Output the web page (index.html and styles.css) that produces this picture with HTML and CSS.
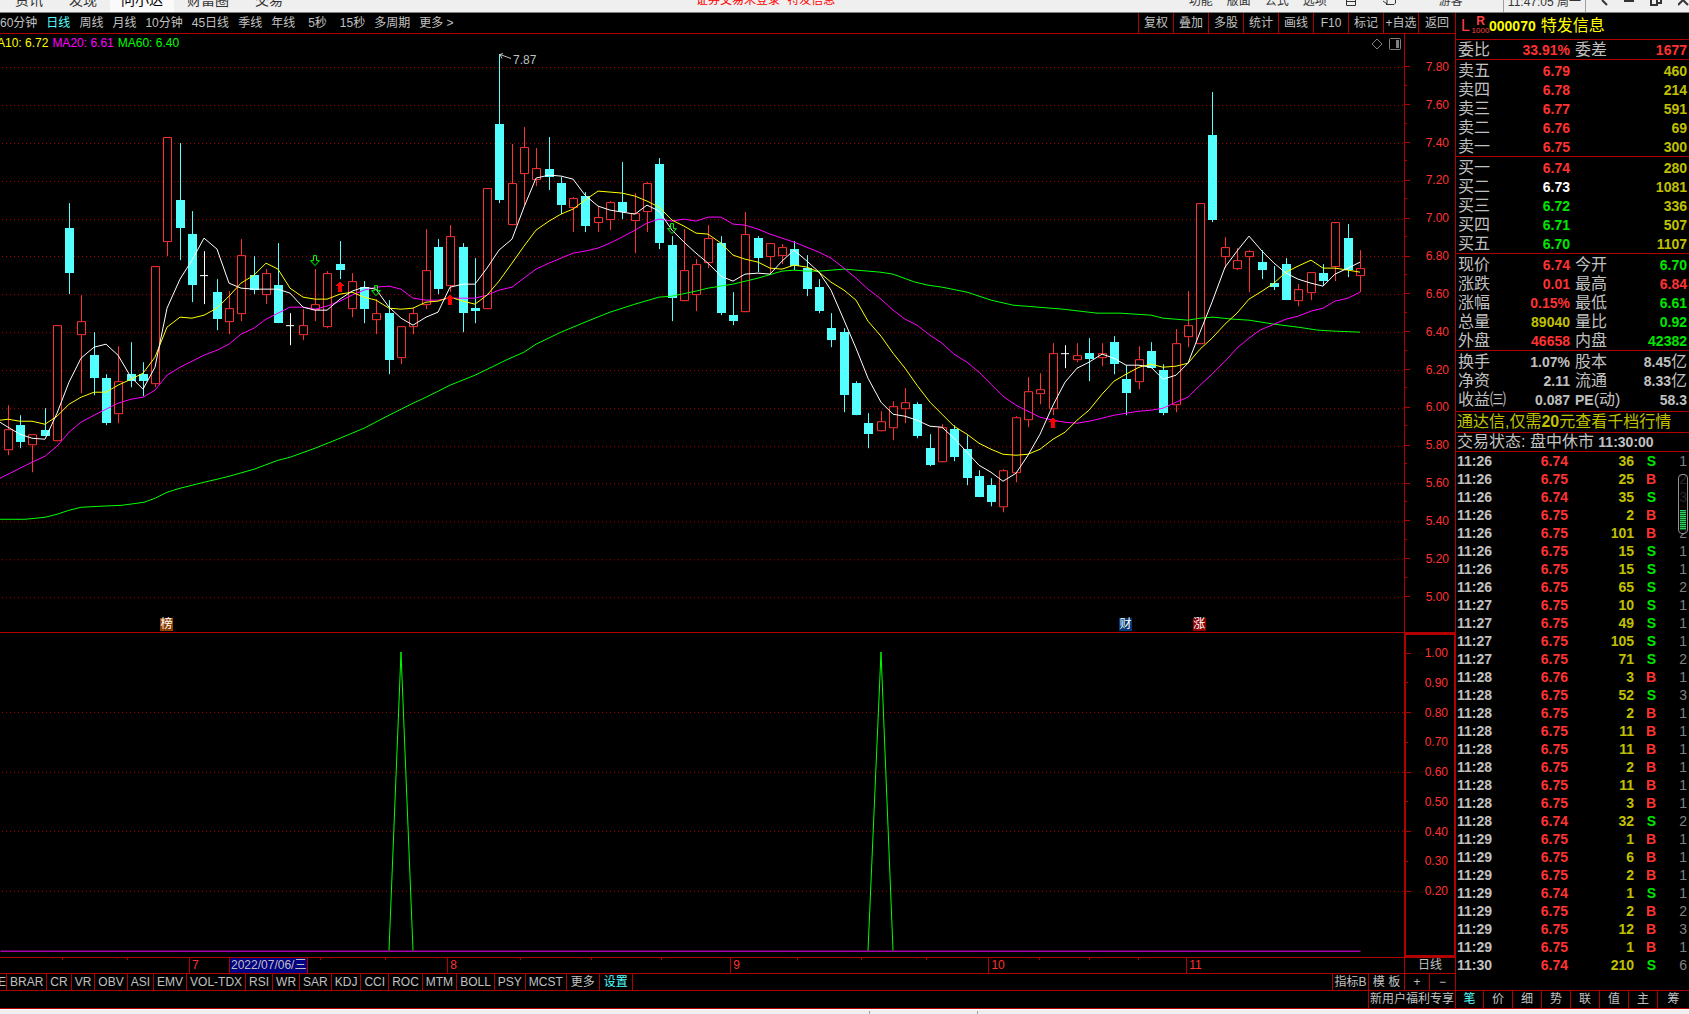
FILE: index.html
```html
<!DOCTYPE html>
<html lang="zh-CN">
<head>
<meta charset="utf-8">
<title>000070 特发信息 - 日线</title>
<link rel="stylesheet" href="styles.css">
</head>
<body>
<header class="titlebar">
  <nav class="main-tabs">
    <button>资讯</button><button>发现</button><button class="selected">问小达</button><button>财富圈</button><button>交易</button>
  </nav>
  <div class="notice"><span>证券交易未登录</span><span>特发信息</span></div>
  <div class="menu">
    <button>功能</button><button>版面</button><button>公式</button><button>选项</button>
    <svg class="menu-icon" width="10" height="20" viewBox="0 0 10 20"><path d="M0.500 0V5.500H9.500V0M1 1.500H9" /></svg>
    <svg class="menu-icon mail" width="13" height="20" viewBox="0 0 13 20"><path d="M0 1L4 4M4 0V4M3 4.500H11L12.500 3V0" /></svg>
    <button class="guest">游客</button>
    <time class="clock">11:47:05 周一</time>
    <div class="window-buttons">
      <svg width="7" height="20" viewBox="0 0 7 20"><path d="M6 5L1 0" /></svg>
      <svg width="10" height="20" viewBox="0 0 10 20"><path d="M0 1H10" /></svg>
      <svg width="12" height="20" viewBox="0 0 12 20"><path d="M1 0V5H7V0M7 3H11V0" /></svg>
      <svg width="11" height="20" viewBox="0 0 11 20"><path d="M0 5L5 0L10 5" /></svg>
    </div>
  </div>
</header>

<main class="workspace">
  <section class="chart-area">
    <div class="toolbar">
      <nav class="periods">
        <button>60分钟</button><button class="active">日线</button><button>周线</button><button>月线</button><button>10分钟</button><button>45日线</button><button>季线</button><button>年线</button><button class="seconds">5秒</button><button>15秒</button><button>多周期</button><button>更多 &gt;</button>
      </nav>
      <nav class="tools">
        <button>复权</button><button>叠加</button><button>多股</button><button>统计</button><button>画线</button><button>F10</button><button>标记</button><button>+自选</button><button>返回</button>
      </nav>
    </div>

    <div class="pane price-pane">
      <div class="plot">
        <svg id="price-chart" viewBox="0 34 1404 598" preserveAspectRatio="none"></svg>
        <div class="legend"><span class="yellow">MA10: 6.72</span><span class="magenta">MA20: 6.61</span><span class="lime">MA60: 6.40</span></div>
        <div class="plot-icons">
          <svg width="12" height="12" viewBox="0 0 12 12"><path d="M6 1L11 6L6 11L1 6Z" /></svg>
          <svg width="12" height="12" viewBox="0 0 12 12"><rect x="0.500" y="0.500" width="11" height="11" rx="1" /><rect class="fill" x="7" y="2" width="3" height="8" /></svg>
        </div>
        <span class="peak">7.87</span>
        <span class="badge brown" style="left:11.400%">榜</span>
        <span class="badge blue" style="left:79.700%">财</span>
        <span class="badge red" style="left:84.950%">涨</span>
      </div>
      <ol class="axis price-axis">
        <li>7.80</li><li>7.60</li><li>7.40</li><li>7.20</li><li>7.00</li><li>6.80</li><li>6.60</li><li>6.40</li><li>6.20</li><li>6.00</li><li>5.80</li><li>5.60</li><li>5.40</li><li>5.20</li><li>5.00</li>
      </ol>
    </div>

    <div class="pane indicator-pane">
      <div class="plot"><svg id="indicator-chart" viewBox="0 633 1404 324" preserveAspectRatio="none"></svg></div>
      <ol class="axis indicator-axis">
        <li>1.00</li><li>0.90</li><li>0.80</li><li>0.70</li><li>0.60</li><li>0.50</li><li>0.40</li><li>0.30</li><li>0.20</li>
      </ol>
    </div>

    <div class="time-row">
      <div class="months">
        <svg id="time-ticks" viewBox="0 0 1404 15" preserveAspectRatio="none"></svg>
        <span style="flex-grow:191"></span><span style="flex-grow:258">7</span><span style="flex-grow:283">8</span><span style="flex-grow:258">9</span><span style="flex-grow:197">10</span><span style="flex-grow:217">11</span>
        <time class="cursor-date">2022/07/06/三</time>
      </div>
      <button class="period-name">日线</button>
    </div>

    <div class="indicator-row">
      <nav class="indicators">
        <button class="cut">E</button><button>BRAR</button><button>CR</button><button>VR</button><button>OBV</button><button>ASI</button><button>EMV</button><button>VOL-TDX</button><button>RSI</button><button>WR</button><button>SAR</button><button>KDJ</button><button>CCI</button><button>ROC</button><button>MTM</button><button>BOLL</button><button>PSY</button><button>MCST</button><button class="wide">更多</button><button class="wide active">设置</button>
      </nav>
      <div class="templates"><button>指标B</button><button>模 板</button></div>
      <div class="zoomers"><button>+</button><button>−</button></div>
    </div>
    <div class="promo-row"><a href="#">新用户福利专享</a></div>
  </section>

  <aside class="quote">
    <h1 class="stock"><span class="flag-l">L</span><span class="flag-r"><b>R</b><i>1000</i></span><b>000070</b><span class="name">特发信息</span></h1>
    <table class="grid4 ratio"><tbody>
      <tr><th>委比</th><td class="up">33.91%</td><th>委差</th><td class="up">1677</td></tr>
    </tbody></table>
    <table class="grid4"><tbody>
      <tr><th>卖五</th><td class="up">6.79</td><td class="vol" colspan="2">460</td></tr>
      <tr><th>卖四</th><td class="up">6.78</td><td class="vol" colspan="2">214</td></tr>
      <tr><th>卖三</th><td class="up">6.77</td><td class="vol" colspan="2">591</td></tr>
      <tr><th>卖二</th><td class="up">6.76</td><td class="vol" colspan="2">69</td></tr>
      <tr><th>卖一</th><td class="up">6.75</td><td class="vol" colspan="2">300</td></tr>
    </tbody></table>
    <table class="grid4"><tbody>
      <tr><th>买一</th><td class="up">6.74</td><td class="vol" colspan="2">280</td></tr>
      <tr><th>买二</th><td class="flat">6.73</td><td class="vol" colspan="2">1081</td></tr>
      <tr><th>买三</th><td class="down">6.72</td><td class="vol" colspan="2">336</td></tr>
      <tr><th>买四</th><td class="down">6.71</td><td class="vol" colspan="2">507</td></tr>
      <tr><th>买五</th><td class="down">6.70</td><td class="vol" colspan="2">1107</td></tr>
    </tbody></table>
    <table class="grid4"><tbody>
      <tr><th>现价</th><td class="up">6.74</td><th>今开</th><td class="down">6.70</td></tr>
      <tr><th>涨跌</th><td class="up">0.01</td><th>最高</th><td class="up">6.84</td></tr>
      <tr><th>涨幅</th><td class="up">0.15%</td><th>最低</th><td class="down">6.61</td></tr>
      <tr><th>总量</th><td class="vol">89040</td><th>量比</th><td class="down">0.92</td></tr>
      <tr><th>外盘</th><td class="up">46658</td><th>内盘</th><td class="down">42382</td></tr>
    </tbody></table>
    <table class="grid4 basics"><tbody>
      <tr><th>换手</th><td>1.07%</td><th>股本</th><td>8.45<span>亿</span></td></tr>
      <tr><th>净资</th><td>2.11</td><th>流通</th><td>8.33<span>亿</span></td></tr>
      <tr><th>收益㈢</th><td>0.087</td><th><b>PE</b>(动)</th><td>58.3</td></tr>
    </tbody></table>
    <a class="ad" href="#">通达信,仅需<b>20</b>元查看千档行情</a>
    <p class="status">交易状态: 盘中休市 <b>11:30:00</b></p>
    <div class="ticks-box">
      <table class="ticks"><tbody id="ticks"></tbody></table>
      <div class="scroller"></div>
    </div>
    <nav class="side-tabs">
      <button class="active">笔</button><button>价</button><button>细</button><button>势</button><button>联</button><button>值</button><button>主</button><button>筹</button>
    </nav>
  </aside>
</main>
<footer class="statusbar"><div></div></footer>
<script src="chart.js"></script>
</body>
</html>
```

FILE: styles.css
```css
:root {
  --line: #b00000;
  --text: #c0c0c0;
  --up: #ff3232;
  --down: #00e600;
  --cyan: #54ffff;
  --olive: #c0c000;
}
* { box-sizing: border-box; }
body {
  margin: 0;
  height: 100vh;
  overflow: hidden;
  display: flex;
  flex-direction: column;
  background: #000;
  color: var(--text);
  font: 12px/16px "Liberation Sans", "Noto Sans CJK SC", sans-serif;
}
button, a {
  font: inherit;
  color: inherit;
  background: none;
  border: 0;
  padding: 0;
  margin: 0;
  white-space: nowrap;
  text-decoration: none;
}
svg { fill: none; }

/* title bar */
.titlebar {
  flex: none;
  height: 13px;
  display: flex;
  overflow: hidden;
  background: #efefef;
  border-bottom: 1px solid #808080;
  color: #333;
}
.main-tabs { flex: 696 0 0; display: flex; padding-left: 2px; }
.main-tabs button { height: 24px; margin-top: -12px; padding: 0 13px; font-size: 14px; line-height: 24px; }
.main-tabs .selected { padding: 0 11px; background: #fafafa; color: #000; }
.notice { flex: 494 0 0; display: flex; gap: 7px; margin-top: -12px; line-height: 24px; color: #f00; }
.menu { flex: 499 0 0; display: flex; align-items: flex-start; line-height: 24px; }
.menu button { height: 24px; margin: -11px 14px 0 0; line-height: 24px; }
.menu svg { flex: none; stroke: #333; stroke-width: 2px; }
.menu .menu-icon { margin-left: 5px; stroke-width: 1px; }
.menu .mail { margin: 0 43px 0 27px; }
.menu .guest { margin-right: 40px; }
.clock { height: 24px; margin-top: -10px; padding: 0 4px; border: solid #a0a0a0; border-width: 0 1px; white-space: nowrap; }
.window-buttons { display: flex; gap: 16px; margin-left: 15px; }

/* frame */
.workspace { flex: 1; min-height: 0; display: grid; grid-template: minmax(0, 1fr) / minmax(0, 1fr) 234px; border-bottom: 1px solid var(--line); }
.chart-area { display: flex; flex-direction: column; min-height: 0; }
.toolbar { flex: none; height: 21px; display: flex; justify-content: space-between; border-bottom: 1px solid var(--line); }
.periods { display: flex; gap: 9px; }
.periods .seconds { padding: 0 4px; }
.periods .active, .indicators .active, .side-tabs .active { color: var(--cyan); }
.tools { display: flex; }
.tools button { width: 35px; border-left: 1px solid var(--line); }
.tools button:last-child { width: 37px; }

/* charts */
.pane { display: grid; grid-template-columns: minmax(0, 1fr) 51px; min-height: 0; }
.price-pane { flex: 599 0 0; border-bottom: 1px solid var(--line); }
.indicator-pane { flex: 324 0 0; }
.plot { position: relative; min-height: 0; overflow: hidden; }
.plot > svg { display: block; width: 100%; height: 100%; shape-rendering: crispEdges; }
.plot > svg * { vector-effect: non-scaling-stroke; }
.legend { position: absolute; left: -13px; top: 1px; display: flex; gap: 4px; }
.yellow { color: #ff0; }
.magenta { color: #f0f; }
.lime { color: #0f0; }
.plot-icons { position: absolute; right: 3px; top: 4px; display: flex; gap: 6px; stroke: #808080; }
.plot-icons .fill { fill: #808080; stroke: none; }
.peak { position: absolute; left: 513px; top: 18px; }
.badge { position: absolute; bottom: 1px; width: 13px; line-height: 13px; text-align: center; color: #fff; }
.brown { background: #8a4100; }
.blue { background: #003a78; }
.red { background: #900000; }
.axis {
  margin: 0;
  list-style: none;
  display: flex;
  flex-direction: column;
  border-left: 1px solid var(--line);
  color: var(--up);
}
.axis li {
  flex: 1;
  display: flex;
  align-items: center;
  justify-content: space-between;
  padding-right: 6px;
}
.axis li::before { content: ""; width: 5px; height: 1px; background: var(--line); }
.price-axis { padding: 14px 0 17px; }
.price-axis li { position: relative; }
.price-axis li::after { content: ""; position: absolute; left: 0; bottom: 0; width: 2px; height: 1px; background: var(--line); }
.price-axis li:last-child::after { display: none; }
.indicator-axis { border: 2px solid var(--line); border-right-width: 1px; padding: 3px 0 49px; }
.indicator-axis li:nth-child(even)::before { width: 2px; }
.grid { stroke: #b00000; stroke-dasharray: 1 3; }
.candle-up { stroke: var(--up); fill: #000; }
.candle-down { stroke: var(--cyan); }
.body-down { fill: var(--cyan); }
.candle-flat { stroke: #fff; }
.ma5 { stroke: #fff; }
.ma10 { stroke: #ff0; }
.ma20 { stroke: #f0f; }
.ma60, .spike, .sell { stroke: #0f0; }
.buy { fill: #f00; }
.pointer { stroke: var(--text); }

/* rows below the charts */
.time-row { flex: none; height: 16px; display: grid; grid-template-columns: minmax(0, 1fr) 51px; border-top: 1px solid var(--line); }
.months { position: relative; display: flex; color: var(--up); line-height: 15px; }
.months span { flex-basis: 0; padding-left: 2px; border-left: 1px solid var(--line); }
.months span:first-of-type { border: 0; padding: 0; }
.months svg { position: absolute; width: 100%; height: 100%; stroke: var(--line); shape-rendering: crispEdges; }
.cursor-date { position: absolute; left: 229px; top: 0; height: 15px; padding: 0 1px; background: #000080; color: var(--text); border: solid var(--line); border-width: 0 1px; }
.period-name { border-left: 1px solid var(--line); line-height: 15px; }
.indicator-row { flex: none; height: 17px; display: flex; border-top: 1px solid var(--line); line-height: 16px; }
.indicators { flex: 1; display: flex; }
.indicators button { padding: 0 3px; border-right: 1px solid var(--line); }
.indicators .wide { padding: 0 4px; }
.indicators .cut { width: 7px; padding: 0; direction: rtl; overflow: hidden; }
.templates, .zoomers { display: flex; }
.templates button { width: 36px; border-left: 1px solid var(--line); }
.zoomers button { width: 25px; border-left: 1px solid var(--line); }
.zoomers button:last-child { width: 26px; }
.promo-row { flex: none; height: 18px; display: flex; justify-content: flex-end; border-top: 1px solid var(--line); line-height: 17px; }
.promo-row a { width: 87px; text-align: center; border-left: 1px solid var(--line); }

/* quote panel */
.quote { display: flex; flex-direction: column; min-height: 0; border-left: 1px solid var(--line); font-size: 14px; }
.quote > * { flex: none; border-bottom: 1px solid var(--line); }
.stock { margin: 0; height: 27px; display: flex; align-items: center; padding-left: 5px; color: #ff0; font-size: 14px; font-weight: normal; line-height: 26px; }
.flag-l { width: 11px; color: #ff4040; font-size: 16px; }
.flag-r { width: 17px; display: flex; flex-direction: column; align-items: center; color: #ff4040; line-height: 9px; }
.flag-r b { font-size: 12px; }
.flag-r i { font-size: 8px; font-style: normal; }
.name { margin-left: 5px; font-size: 16px; }
.grid4 { width: 100%; height: 97px; padding-top: 1px; table-layout: fixed; border-collapse: separate; border-spacing: 0; }
.grid4 th, .grid4 td { height: 19px; padding: 0; line-height: 18px; white-space: nowrap; }
.grid4 th { width: 50px; padding-left: 2px; text-align: left; font-size: 16px; font-weight: normal; }
.grid4 td + th { padding-left: 5px; }
.grid4 td:nth-child(2) { width: 64px; }
.grid4 td { text-align: right; font-weight: bold; }
.grid4 td:last-child { padding-right: 2px; }
.grid4 td span { font-size: 16px; font-weight: normal; line-height: 16px; }
.grid4 b { font-size: 14px; line-height: 14px; }
.ratio { height: 20px; padding: 0; }
.basics { height: 61px; padding-bottom: 2px; }
.up { color: var(--up); }
.down { color: var(--down); }
.flat { color: #fff; }
.vol { color: var(--olive); }
.ad { height: 21px; padding-left: 1px; color: var(--olive); font-size: 16px; line-height: 20px; }
.status { margin: 0; height: 19px; padding-left: 1px; font-size: 16px; line-height: 18px; white-space: nowrap; }
.status b { font-size: 14px; }
.quote .ticks-box { flex: 1; min-height: 0; position: relative; overflow: hidden; }
.ticks { width: 100%; table-layout: fixed; border-collapse: collapse; font-weight: bold; text-align: right; }
.ticks td { height: 18px; padding: 0; line-height: 18px; }
.ticks td:first-child { width: 48px; padding-left: 1px; text-align: left; }
.ticks td:nth-child(2) { width: 64px; }
.ticks td:nth-child(3) { width: 66px; }
.ticks td:nth-child(4) { width: 22px; }
.ticks td:nth-child(5) { padding-right: 2px; color: #808080; font-weight: normal; }
.scroller {
  position: absolute;
  top: 22px;
  right: 1px;
  width: 10px;
  height: 60px;
  padding: 35px 1px 3px;
  border: 1px solid #909090;
  border-radius: 4px;
  background: repeating-linear-gradient(#2fd060 0 1px, #0a5a20 1px 2px) content-box, rgba(0, 0, 0, .7);
}
.quote .side-tabs { height: 17px; display: flex; border: 0; font-size: 12px; line-height: 17px; }
.side-tabs button { width: 29px; border-left: 1px solid var(--line); }
.side-tabs button:first-child { width: 27px; border: 0; }
.side-tabs button:last-child { flex: 1; }
.statusbar { flex: none; height: 5px; border-top: 1px solid #fff; background: #efefef; display: flex; }
.statusbar div { margin: 1px 0 0 869px; width: 109px; border: solid #a0a0a0; border-width: 0 1px; }
```

FILE: chart.js
```js
// Each candle: x, high, body top, body bottom, low, kind (r rising, c falling, w unchanged)
const candles = `8,405,429,449,455,r 20,415,425,442,448,c 32,434,434,444,472,r 45,408,430,436,436,c 57,325,325,440,440,r
69,203,228,273,294,c 81,295,321,334,393,r 94,332,355,378,395,c 106,374,378,423,425,c 118,346,381,413,423,r
131,342,374,381,387,c 143,362,374,381,396,c 155,266,266,383,387,r 167,137,137,241,256,r 180,143,200,228,260,c
192,211,234,285,302,c 204,251,275,275,304,w 217,279,292,319,330,c 229,291,308,321,334,r 241,239,255,313,321,r
254,256,275,290,294,c 266,269,273,294,304,r 278,243,285,323,323,c 290,313,325,325,345,w 303,309,325,334,340,r
315,269,304,309,321,r 327,271,273,326,328,r 340,241,264,270,279,c 352,273,281,308,317,r 364,281,287,309,323,c
376,299,313,319,334,r 389,300,313,360,374,c 401,326,326,357,364,r 413,308,313,326,334,r 426,229,270,304,309,r
438,239,247,289,294,c 450,225,236,285,292,r 463,243,247,313,332,c 475,258,308,311,323,c 487,188,188,308,308,r
499,54,124,200,203,c 512,144,183,224,224,r 524,127,147,173,205,r 536,148,168,179,186,r 549,137,169,177,190,c
561,177,183,205,214,c 573,197,198,207,232,r 585,192,196,226,232,c 598,206,217,222,232,r 610,201,202,219,230,r
622,162,202,212,219,c 635,193,213,220,253,r 647,182,183,211,232,r 659,158,164,243,249,c 672,236,245,298,321,c
684,229,270,300,300,r 696,259,264,294,311,r 708,225,238,262,268,r 721,236,243,313,315,c 733,292,315,321,325,c
745,212,234,311,311,r 758,236,238,258,272,c 770,243,243,256,273,r 782,244,247,255,264,r 794,241,249,266,270,c
807,255,268,289,296,c 819,279,287,311,313,c 831,313,328,340,347,c 844,328,332,395,412,c 856,381,383,415,415,c
868,413,423,434,448,c 881,411,421,430,430,r 893,401,406,427,440,r 905,388,402,408,423,r 917,402,404,436,438,c
930,434,448,465,466,c 942,424,427,461,461,r 954,425,429,457,461,c 967,435,449,478,485,c 979,470,476,497,497,c
991,478,485,502,506,c 1003,469,470,506,512,r 1016,416,417,472,482,r 1028,377,391,419,427,r 1040,373,389,393,404,r
1053,343,353,408,415,r 1065,345,353,353,368,w 1077,343,355,359,362,r 1089,338,353,359,381,c 1102,343,353,357,366,r
1114,336,342,364,374,c 1126,365,379,393,415,c 1139,346,359,381,389,r 1151,342,351,368,368,c 1163,364,370,413,415,c
1176,329,343,404,412,r 1188,291,325,336,347,r 1200,203,203,343,343,r 1212,92,135,220,222,c 1225,237,247,256,268,r
1237,248,260,268,270,r 1249,250,251,256,292,r 1262,250,262,270,279,c 1274,266,283,287,290,c 1286,258,264,300,300,c
1298,284,289,300,306,r 1311,272,272,292,300,r 1323,264,273,281,286,c 1335,222,222,266,281,r 1348,224,238,270,277,c
1360,250,268,275,292,r`.split(/\s+/).map(s => s.split(',').map((v, i) => (i < 5 ? +v : v)));

const averages = {
  ma60: '0,519 25,519 45,517 57,514 69,510 81,507 100,506 122,505 144,502 155,498 167,492 180,488 204,482 217,479 229,476 254,469 278,460 290,457 315,448 340,438 364,428 389,415 413,403 426,397 450,385 475,375 508,359 524,352 536,344 561,332 585,322 610,312 635,304 659,297 672,296 696,291 708,288 733,284 758,278 782,271 794,270 807,271 819,271 844,269 856,270 880,272 893,274 915,282 928,285 942,287 967,292 991,300 1013,305 1038,307 1063,309 1097,313 1120,313 1151,315 1163,318 1188,320 1200,318 1213,317 1233,319 1249,320 1274,324 1298,327 1318,330 1335,331 1360,332',
  ma20: '0,478 8,474 20,468 32,462 45,456 57,446 69,432 81,422 94,415 106,409 118,403 131,399 143,397 155,390 167,375 180,367 192,361 204,355 217,350 229,344 241,334 254,328 266,319 278,313 290,307 303,307 315,309 327,306 340,301 352,295 364,290 376,287 389,286 401,289 413,298 426,300 438,300 450,298 475,298 487,295 499,290 512,287 524,278 536,269 549,263 561,258 573,253 585,251 598,248 610,243 622,237 635,230 647,223 659,219 672,221 684,219 696,221 708,217 721,217 733,224 745,225 758,229 770,234 794,242 819,252 831,258 844,268 856,278 868,289 881,299 893,310 905,319 917,325 930,335 942,343 954,354 967,362 979,372 991,384 1003,396 1016,405 1028,411 1040,417 1053,420 1065,422 1077,423 1089,421 1102,418 1114,415 1126,413 1139,411 1151,410 1163,408 1176,402 1188,397 1200,385 1212,374 1225,361 1237,348 1249,338 1260,330 1274,324 1286,319 1298,316 1311,311 1323,308 1335,301 1348,298 1360,292',
  ma10: '0,420 8,419 20,421 32,421 45,424 57,416 69,404 81,397 94,392 106,392 118,385 131,379 143,373 155,357 167,327 180,317 192,318 204,315 217,308 229,296 241,283 254,275 266,263 278,269 290,288 303,297 315,299 327,299 340,294 352,292 364,297 376,300 389,308 401,309 413,308 426,302 438,301 450,297 463,301 475,304 487,295 499,281 512,263 524,246 536,230 549,221 561,214 573,209 585,200 598,191 610,192 622,193 635,196 647,201 659,207 672,220 684,226 696,233 708,234 721,243 733,255 745,259 758,262 770,268 782,269 794,265 807,267 819,272 831,282 844,290 856,300 868,321 881,336 893,353 905,368 917,385 930,402 942,414 954,426 967,434 979,443 991,449 1003,454 1016,455 1028,454 1040,449 1053,439 1065,432 1077,420 1089,410 1102,394 1114,381 1126,374 1139,367 1151,364 1163,367 1176,366 1188,363 1200,349 1212,338 1225,324 1237,313 1249,299 1262,291 1274,283 1286,272 1298,266 1311,260 1323,268 1335,268 1348,270 1360,272',
  ma5: '0,422 8,427 20,434 32,438 45,439 57,413 69,382 81,358 94,347 106,344 118,355 131,377 143,389 155,367 167,308 180,279 192,260 204,238 217,249 229,283 241,288 254,289 278,289 290,293 303,307 315,310 327,310 340,299 352,291 364,287 376,289 389,307 401,318 413,325 426,317 438,312 450,287 463,284 475,284 487,268 499,250 512,239 524,207 536,178 549,175 561,176 573,179 585,195 598,206 610,210 622,212 635,214 647,205 659,211 672,230 684,242 696,253 708,263 721,276 733,281 745,274 758,273 770,274 782,261 794,250 807,261 819,272 831,290 844,320 856,348 868,378 881,402 893,414 905,416 917,420 930,426 942,427 954,438 967,452 979,465 991,472 1003,481 1016,473 1028,455 1040,434 1053,405 1065,382 1077,368 1089,362 1102,354 1114,358 1126,365 1139,365 1151,367 1163,379 1176,375 1188,363 1200,332 1212,302 1225,267 1237,251 1249,236 1262,251 1274,263 1286,273 1298,279 1311,283 1323,286 1335,274 1348,268 1360,262'
};

const line = (cls, x1, y1, x2, y2) =>
  `<path class="${cls}" d="M${x1 + 0.5} ${y1 + 0.5}L${x2 + 0.5} ${y2 + 0.5}"/>`;
const gridLine = y => `<path class="grid" d="M2 ${y + 0.5}H1404"/>`;

function drawCandle([x, high, top, bottom, low, kind]) {
  const c = x + 0.5;
  if (kind === 'w') {
    return `<path class="candle-flat" d="M${c} ${high}V${low}M${x - 4} ${top + 0.5}H${x + 4}"/>`;
  }
  if (kind === 'c') {
    return `<path class="candle-down" d="M${c} ${high}V${low}"/>` +
      `<rect class="body-down" x="${x - 4}" y="${top}" width="9" height="${Math.max(bottom - top, 1)}"/>`;
  }
  return `<path class="candle-up" d="M${c} ${high}V${top}M${c} ${bottom + 1}V${low}"/>` +
    `<rect class="candle-up" x="${x - 3.5}" y="${top + 0.5}" width="8" height="${Math.max(bottom - top, 1)}"/>`;
}

const priceGrid = [67, 105, 143, 181, 219, 256, 294, 332, 370, 408, 446, 483, 521, 559, 597];
const sellSignals = [[315, 255], [376, 285], [672, 223]];
const buySignals = [[340, 281], [450, 294], [1053, 417]];

document.getElementById('price-chart').innerHTML =
  priceGrid.map(gridLine).join('') +
  candles.map(drawCandle).join('') +
  Object.entries(averages).map(([cls, pts]) => `<polyline class="${cls}" points="${pts}"/>`).join('') +
  sellSignals.map(([x, y]) => `<path class="sell" d="M${x - 1.5} ${y + 0.5}h3v5h3l-4.500 5l-4.500 -5h3z"/>`).join('') +
  buySignals.map(([x, y]) => `<path class="buy" d="M${x} ${y}l5 5h-3v6h-4v-6h-3z"/>`).join('') +
  '<path class="pointer" d="M511 58.500L500 54.500M500 54.500L503 53.500M500 54.500L502 58.500"/>';

document.getElementById('indicator-chart').innerHTML =
  [712, 772, 831, 891].map(gridLine).join('') +
  '<polyline class="spike" points="389,951 401,652 413,951"/>' +
  '<polyline class="spike" points="868,951 881,652 893,951"/>' +
  line('ma20', 0, 951, 1360, 951);

document.getElementById('time-ticks').innerHTML =
  [62, 127, 320, 385, 520, 591, 661, 797, 861, 926, 1039, 1089, 1138].map(x => line('', x, -0.5, x, 1.5)).join('');

const trades = `11:26 6.74 36 S 1|11:26 6.75 25 B 2|11:26 6.74 35 S 3|11:26 6.75 2 B 1|11:26 6.75 101 B 2|11:26 6.75 15 S 1|11:26 6.75 15 S 1|11:26 6.75 65 S 2|11:27 6.75 10 S 1|11:27 6.75 49 S 1|11:27 6.75 105 S 1|11:27 6.75 71 S 2|11:28 6.76 3 B 1|11:28 6.75 52 S 3|11:28 6.75 2 B 1|11:28 6.75 11 B 1|11:28 6.75 11 B 1|11:28 6.75 2 B 1|11:28 6.75 11 B 1|11:28 6.75 3 B 1|11:28 6.74 32 S 2|11:29 6.75 1 B 1|11:29 6.75 6 B 1|11:29 6.75 2 B 1|11:29 6.74 1 S 1|11:29 6.75 2 B 2|11:29 6.75 12 B 3|11:29 6.75 1 B 1|11:30 6.74 210 S 6`;
document.getElementById('ticks').innerHTML = trades.split('|').map(row => {
  const [time, price, volume, side, count] = row.split(' ');
  return `<tr><td>${time}</td><td class="up">${price}</td><td class="vol">${volume}</td>` +
    `<td class="${side === 'B' ? 'up' : 'down'}">${side}</td><td>${count}</td></tr>`;
}).join('');
```
